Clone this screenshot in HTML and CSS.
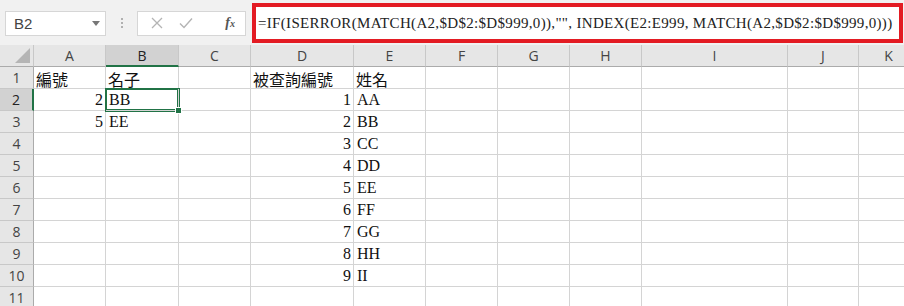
FILE: index.html
```html
<!DOCTYPE html>
<html lang="zh-Hant">
<head>
    <meta charset="UTF-8">
    <title>Excel</title>
    <link rel="stylesheet" href="styles.css">
</head>
<body>
    <div class="toolbar">
        <div class="name-box">
            <span>B2</span>
            <svg class="arrow" width="8" height="5" viewBox="0 0 8 5"><path d="M0 0H8L4 5Z" fill="#777"/></svg>
        </div>
        <div class="dots"><i></i><i></i><i></i></div>
        <div class="fx-buttons">
            <svg width="12" height="12" viewBox="0 0 12 12"><path d="M1 1L11 11M11 1L1 11" stroke="#b4b4b4" stroke-width="1.3" fill="none"/></svg>
            <svg width="14" height="12" viewBox="0 0 14 12"><path d="M1 6.5L5 10.5L13 1.5" stroke="#b4b4b4" stroke-width="1.4" fill="none"/></svg>
            <span class="fx">f<sub>x</sub></span>
        </div>
        <div class="formula">=IF(ISERROR(MATCH(A2,$D$2:$D$999,0)),"", INDEX(E2:E999, MATCH(A2,$D$2:$D$999,0)))</div>
    </div>

    <div class="sheet">
        <div class="hd corner"><b></b></div>
        <div class="hd">A</div>
        <div class="hd active-col">B</div>
        <div class="hd">C</div>
        <div class="hd">D</div>
        <div class="hd">E</div>
        <div class="hd">F</div>
        <div class="hd">G</div>
        <div class="hd">H</div>
        <div class="hd">I</div>
        <div class="hd">J</div>
        <div class="hd">K</div>

        <div class="rh">1</div>
        <div class="c cjk">編號</div><div class="c cjk">名子</div><div class="c"></div>
        <div class="c cjk">被查詢編號</div><div class="c cjk">姓名</div>
        <div class="c"></div><div class="c"></div><div class="c"></div><div class="c"></div><div class="c"></div><div class="c"></div>

        <div class="rh active-row">2</div>
        <div class="c num">2</div><div class="c sel">BB</div><div class="c"></div>
        <div class="c num">1</div><div class="c">AA</div>
        <div class="c"></div><div class="c"></div><div class="c"></div><div class="c"></div><div class="c"></div><div class="c"></div>

        <div class="rh">3</div>
        <div class="c num">5</div><div class="c">EE</div><div class="c"></div>
        <div class="c num">2</div><div class="c">BB</div>
        <div class="c"></div><div class="c"></div><div class="c"></div><div class="c"></div><div class="c"></div><div class="c"></div>

        <div class="rh">4</div>
        <div class="c"></div><div class="c"></div><div class="c"></div>
        <div class="c num">3</div><div class="c">CC</div>
        <div class="c"></div><div class="c"></div><div class="c"></div><div class="c"></div><div class="c"></div><div class="c"></div>

        <div class="rh">5</div>
        <div class="c"></div><div class="c"></div><div class="c"></div>
        <div class="c num">4</div><div class="c">DD</div>
        <div class="c"></div><div class="c"></div><div class="c"></div><div class="c"></div><div class="c"></div><div class="c"></div>

        <div class="rh">6</div>
        <div class="c"></div><div class="c"></div><div class="c"></div>
        <div class="c num">5</div><div class="c">EE</div>
        <div class="c"></div><div class="c"></div><div class="c"></div><div class="c"></div><div class="c"></div><div class="c"></div>

        <div class="rh">7</div>
        <div class="c"></div><div class="c"></div><div class="c"></div>
        <div class="c num">6</div><div class="c">FF</div>
        <div class="c"></div><div class="c"></div><div class="c"></div><div class="c"></div><div class="c"></div><div class="c"></div>

        <div class="rh">8</div>
        <div class="c"></div><div class="c"></div><div class="c"></div>
        <div class="c num">7</div><div class="c">GG</div>
        <div class="c"></div><div class="c"></div><div class="c"></div><div class="c"></div><div class="c"></div><div class="c"></div>

        <div class="rh">9</div>
        <div class="c"></div><div class="c"></div><div class="c"></div>
        <div class="c num">8</div><div class="c">HH</div>
        <div class="c"></div><div class="c"></div><div class="c"></div><div class="c"></div><div class="c"></div><div class="c"></div>

        <div class="rh">10</div>
        <div class="c"></div><div class="c"></div><div class="c"></div>
        <div class="c num">9</div><div class="c">II</div>
        <div class="c"></div><div class="c"></div><div class="c"></div><div class="c"></div><div class="c"></div><div class="c"></div>

        <div class="rh">11</div>
        <div class="c"></div><div class="c"></div><div class="c"></div>
        <div class="c"></div><div class="c"></div>
        <div class="c"></div><div class="c"></div><div class="c"></div><div class="c"></div><div class="c"></div><div class="c"></div>
    </div>
</body>
</html>
```

FILE: styles.css
```css
html, body {
    margin: 0;
    padding: 0;
    background: #ffffff;
    overflow: hidden;
}
body {
    width: 904px;
    height: 306px;
    font-family: "Liberation Serif", serif;
}

/* formula bar */
.toolbar {
    height: 46px;
    background: #f1f1f1;
    display: flex;
    align-items: center;
    box-sizing: border-box;
    padding-left: 5px;
}
.name-box {
    width: 101px;
    height: 25px;
    box-sizing: border-box;
    background: #fff;
    border: 1px solid #d6d6d6;
    display: flex;
    align-items: center;
    justify-content: space-between;
    padding: 0 5px 0 8px;
    font-family: "Liberation Sans", sans-serif;
    font-size: 15px;
    color: #444;
}
.dots {
    width: 31px;
    display: flex;
    flex-direction: column;
    align-items: center;
    gap: 2px;
}
.dots i {
    width: 2px;
    height: 2px;
    background: #b0b0b0;
}
.fx-buttons {
    width: 109px;
    height: 25px;
    box-sizing: border-box;
    background: #fff;
    border: 1px solid #d6d6d6;
    display: flex;
    align-items: center;
    padding: 0 10px 0 13px;
    gap: 16px;
}
.fx {
    margin-left: auto;
    font-style: italic;
    font-weight: bold;
    font-size: 14px;
    color: #555;
}
.fx sub {
    font-size: 10px;
    vertical-align: 0;
}
.formula {
    margin-left: 6px;
    width: 651px;
    height: 40px;
    box-sizing: border-box;
    border: 4px solid #e31b23;
    background: #fff;
    display: flex;
    align-items: center;
    padding-left: 2px;
    font-size: 15px;
    letter-spacing: 0.32px;
    color: #222;
    white-space: nowrap;
    overflow: hidden;
}

/* grid */
.sheet {
    display: grid;
    grid-template-columns: 34px 72px 73px 72px 103px 72px 72px 72px 72px 146px 71px 60px;
    grid-template-rows: repeat(12, 22px);
    margin-top: -1px;
}
.sheet > div {
    box-sizing: border-box;
    border-right: 1px solid #d4d4d4;
    border-bottom: 1px solid #d4d4d4;
    overflow: hidden;
    white-space: nowrap;
}
.hd {
    background: #e6e6e6;
    border-color: #c8c8c8 !important;
    border-bottom-color: #ababab !important;
    font-family: "Open Sans", "DejaVu Sans", sans-serif;
    font-size: 14px;
    color: #444;
    text-align: center;
    line-height: 22px;
}
.corner {
    position: relative;
}
.corner b {
    position: absolute;
    right: 3px;
    bottom: 3px;
    width: 0;
    height: 0;
    border-left: 15px solid transparent;
    border-bottom: 15px solid #b5b5b5;
}
.active-col {
    background: #d2d2d2;
    border-bottom: 2px solid #217346 !important;
    color: #222;
}
.rh {
    background: #e6e6e6;
    border-right-color: #ababab !important;
    border-bottom-color: #c8c8c8 !important;
    font-family: "Open Sans", "DejaVu Sans", sans-serif;
    font-size: 14px;
    color: #444;
    text-align: center;
    line-height: 22px;
}
.active-row {
    background: #d2d2d2;
    border-right: 2px solid #217346 !important;
    color: #222;
}
.c {
    font-size: 16px;
    line-height: 22px;
    padding: 0 3px;
    color: #111;
}
.sheet > .cjk {
    font-family: "Noto Sans CJK TC", sans-serif;
    font-size: 16px;
    line-height: 24px;
    padding-left: 2px;
    overflow: visible;
}
.num {
    text-align: right;
    padding-right: 2px;
}
.sel {
    position: relative;
    overflow: visible !important;
    box-shadow: 0 0 0 1px #217346, inset 0 0 0 1px #217346;
}
.sel::after {
    content: "";
    position: absolute;
    right: -4px;
    bottom: -4px;
    width: 5px;
    height: 5px;
    background: #217346;
    border: 1px solid #fff;
    z-index: 2;
}
```
